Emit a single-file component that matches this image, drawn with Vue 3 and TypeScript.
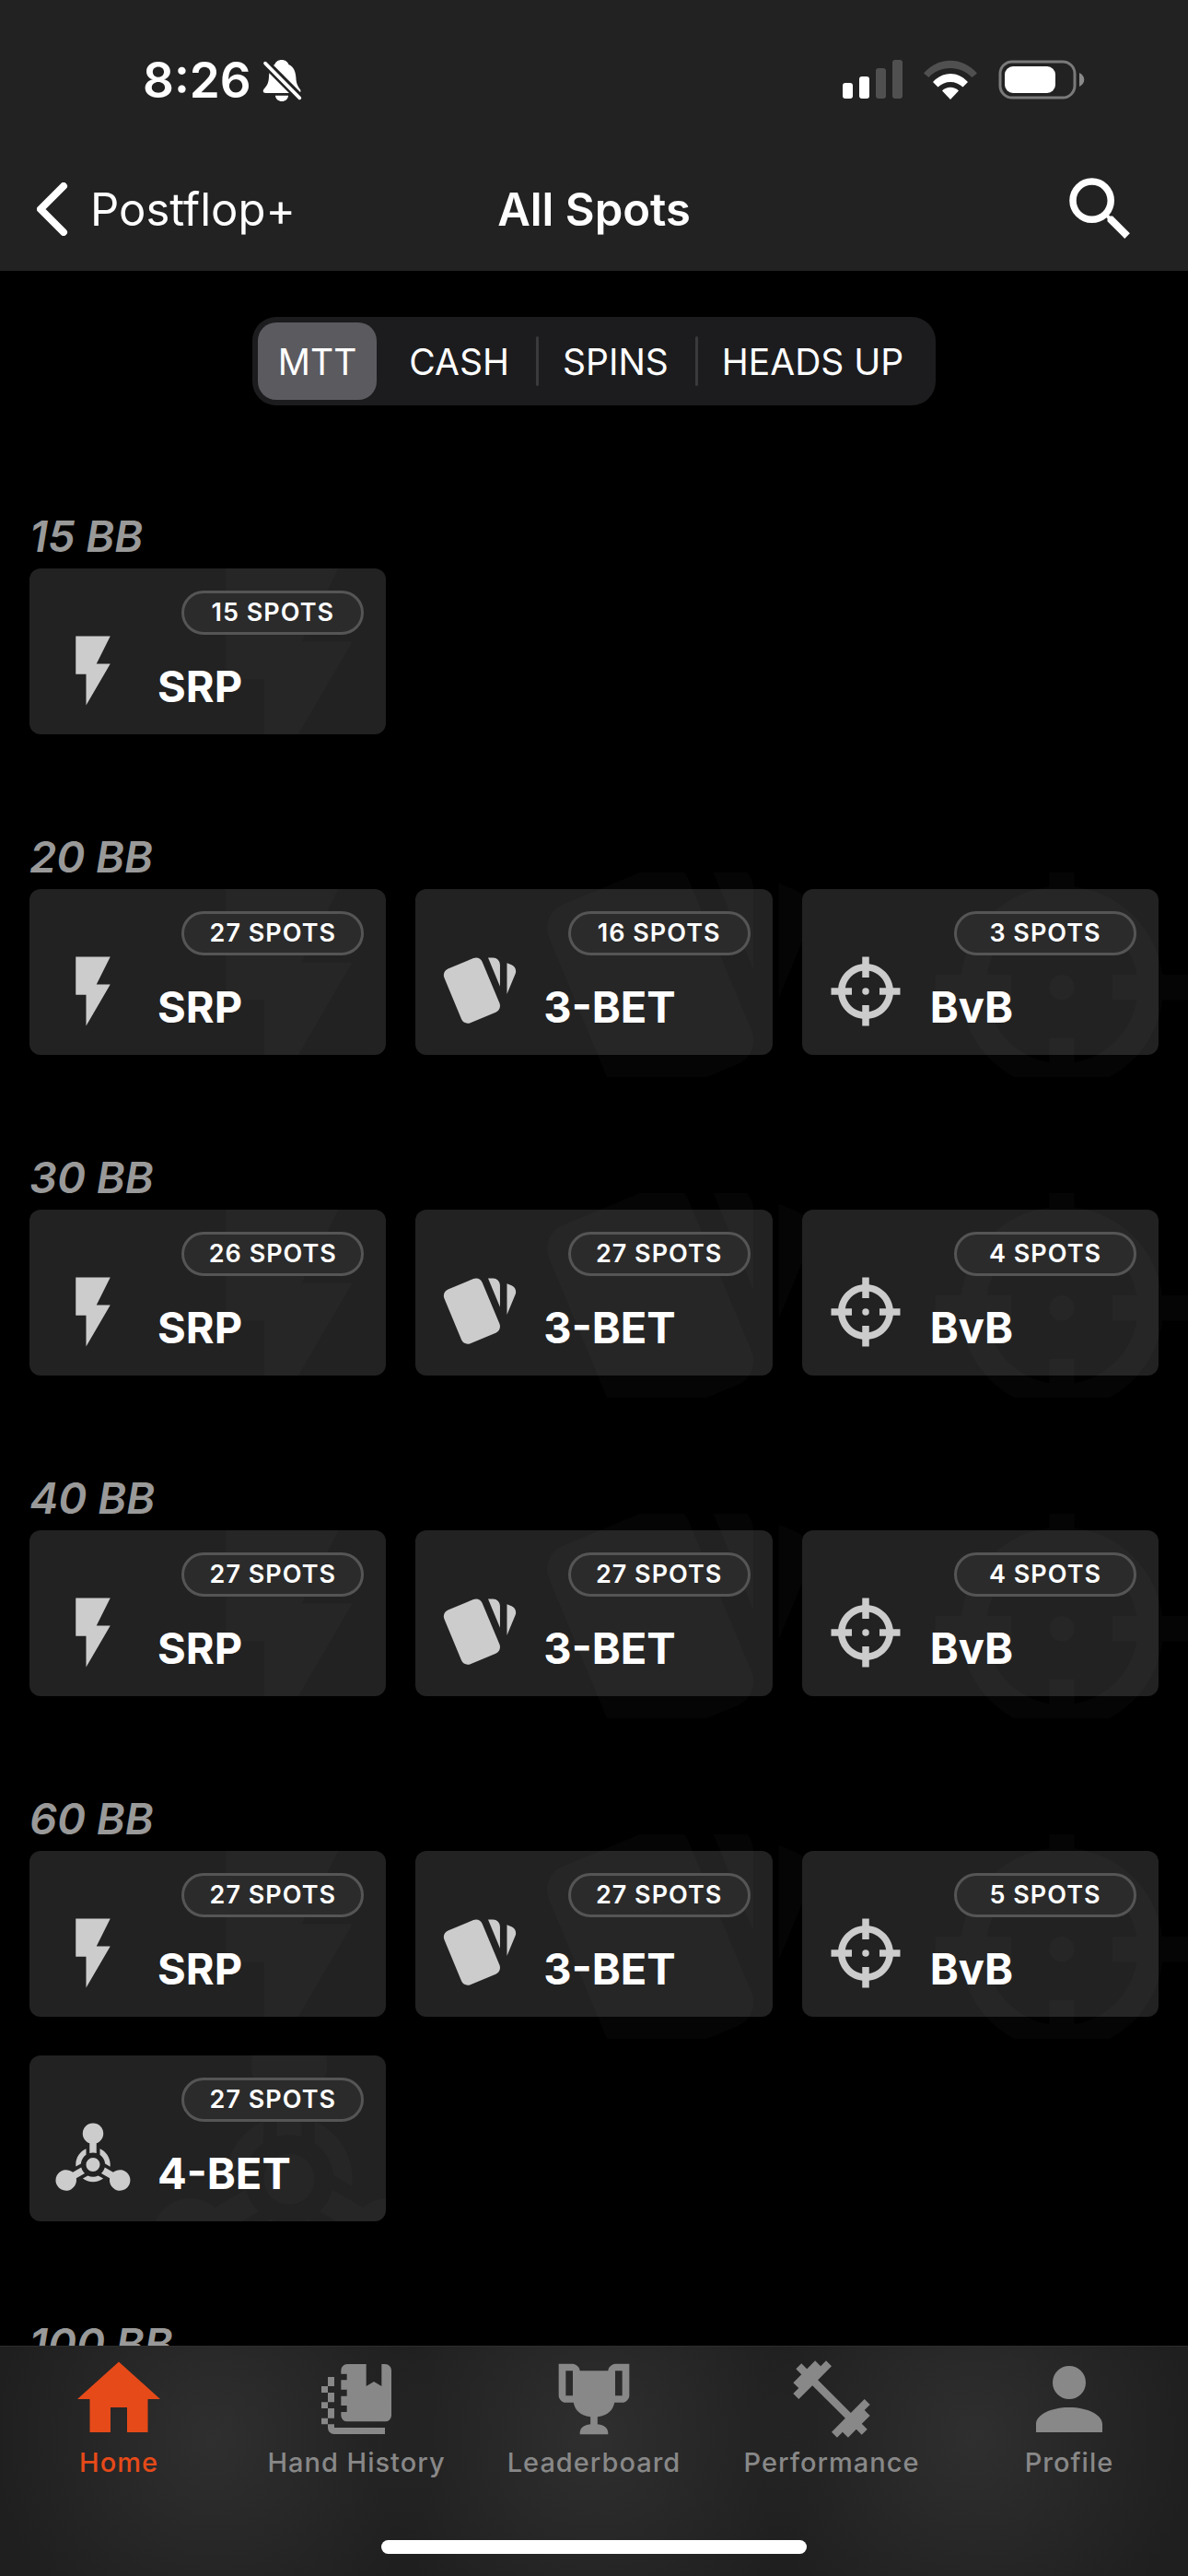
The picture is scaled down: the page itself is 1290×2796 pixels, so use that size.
<script setup lang="ts">
import { ref } from 'vue'

type Kind = 'SRP' | '3-BET' | 'BvB' | '4-BET'

interface Spot {
  kind: Kind
  count: number
}

interface Section {
  title: string
  spots: Spot[]
}

const formats = ['MTT', 'CASH', 'SPINS', 'HEADS UP']
const format = ref('MTT')

const sections: Section[] = [
  { title: '15 BB', spots: [{ kind: 'SRP', count: 15 }] },
  {
    title: '20 BB',
    spots: [
      { kind: 'SRP', count: 27 },
      { kind: '3-BET', count: 16 },
      { kind: 'BvB', count: 3 },
    ],
  },
  {
    title: '30 BB',
    spots: [
      { kind: 'SRP', count: 26 },
      { kind: '3-BET', count: 27 },
      { kind: 'BvB', count: 4 },
    ],
  },
  {
    title: '40 BB',
    spots: [
      { kind: 'SRP', count: 27 },
      { kind: '3-BET', count: 27 },
      { kind: 'BvB', count: 4 },
    ],
  },
  {
    title: '60 BB',
    spots: [
      { kind: 'SRP', count: 27 },
      { kind: '3-BET', count: 27 },
      { kind: 'BvB', count: 5 },
      { kind: '4-BET', count: 27 },
    ],
  },
  { title: '100 BB', spots: [] },
]

const kindIcons: Record<Kind, string> = {
  SRP: 'M7,2V13H10V22L17,10H13L17,2H7Z',
  '3-BET':
    'M21.47,4.35L20.13,3.79V12.82L22.56,6.96C22.97,5.94 22.5,4.77 21.47,4.35M1.97,8.05L6.93,20C7.24,20.77 7.97,21.24 8.74,21.26C9,21.26 9.27,21.21 9.53,21.1L16.9,18.05C17.65,17.74 18.11,17 18.13,16.26C18.14,16 18.09,15.71 18,15.45L13,3.5C12.71,2.73 11.97,2.26 11.19,2.25C10.93,2.25 10.67,2.31 10.42,2.4L3.06,5.45C2.04,5.87 1.55,7.04 1.97,8.05M18.12,4.25A2,2 0 0,0 16.12,2.25H14.67L18.12,10.59',
  BvB: 'M11,2V4.06C7.38,4.5 4.5,7.38 4.06,11H2V13H4.06C4.5,16.62 7.38,19.5 11,19.94V22H13V19.94C16.62,19.5 19.5,16.62 19.94,13H22V11H19.94C19.5,7.38 16.62,4.5 13,4.06V2H11M11,6.08V8H13V6.09C15.5,6.5 17.5,8.5 17.92,11H16V13H17.91C17.5,15.5 15.5,17.5 13,17.92V16H11V17.91C8.5,17.5 6.5,15.5 6.08,13H8V11H6.09C6.5,8.5 8.5,6.5 11,6.08M12,11A1,1 0 0,0 11,12A1,1 0 0,0 12,13A1,1 0 0,0 13,12A1,1 0 0,0 12,11Z',
  '4-BET':
    'M11,7.83C9.83,7.42 9,6.3 9,5A3,3 0 0,1 12,2A3,3 0 0,1 15,5C15,6.31 14.16,7.42 13,7.83V10.64C12.68,10.55 12.35,10.5 12,10.5C11.65,10.5 11.32,10.55 11,10.64V7.83M18.3,21.1C17.16,20.45 16.62,19.18 16.84,17.96L14.4,16.55C14.88,16.09 15.24,15.5 15.4,14.82L17.84,16.23C18.78,15.42 20.16,15.26 21.29,15.91C22.73,16.74 23.22,18.57 22.39,20C21.56,21.44 19.73,21.93 18.3,21.1M2.7,15.9C3.83,15.25 5.21,15.42 6.15,16.22L8.6,14.81C8.76,15.5 9.11,16.08 9.6,16.54L7.15,17.95C7.38,19.17 6.83,20.45 5.7,21.1C4.26,21.93 2.43,21.44 1.6,20C0.77,18.57 1.26,16.73 2.7,15.9M14,14A2,2 0 0,1 12,16C10.89,16 10,15.1 10,14A2,2 0 0,1 12,12C13.11,12 14,12.9 14,14M17,14L16.97,14.57L15.5,13.71C15.4,12.64 14.83,11.71 14,11.12V9.41C15.77,10.19 17,11.95 17,14M14.97,18.03C14.14,18.64 13.11,19 12,19C10.89,19 9.86,18.64 9.03,18L10.5,17.17C10.96,17.38 11.47,17.5 12,17.5C12.53,17.5 13.03,17.38 13.5,17.17L14.97,18.03M7.03,14.56L7,14C7,11.95 8.23,10.19 10,9.42V11.13C9.17,11.71 8.6,12.64 8.5,13.7L7.03,14.56Z',
}

// These icons stay inside their card; the others spill past its edges.
const contained: Kind[] = ['SRP', '4-BET']

interface Tab {
  label: string
  size: 'large' | 'medium' | 'small'
  viewBox: string
  path: string
}

const activeTab = ref('Home')

const tabs: Tab[] = [
  {
    label: 'Home',
    size: 'large',
    viewBox: '0 0 24 24',
    path: 'M10,20V14H14V20H19V12H22L12,3L2,12H5V20H10Z',
  },
  {
    label: 'Hand History',
    size: 'small',
    viewBox: '30 24 276 276',
    path: 'M138 48H200V120L225 105L250 120V48H262a20 20 0 0 1 20 20V215a20 20 0 0 1 -20 20H138a20 20 0 0 1 -20 -20V204H137V183H118V152H137V131H118V100H137V80H118V68a20 20 0 0 1 20 -20ZM75 90h21v30h-21ZM54 120h21v21h-21ZM75 141h21v31h-21ZM54 172h21v20h-21ZM75 192h21v32h-21ZM54 224h21v20h-21ZM75 244H96V255H261V276H95a20 20 0 0 1 -20 -20Z',
  },
  {
    label: 'Leaderboard',
    size: 'small',
    viewBox: '0 0 24 24',
    path: 'M20.2,2H18C17.1,2 16,3 16,4H8C8,3 6.9,2 6,2H2V11C2,12 3,13 4,13H6.2C6.6,15 7.9,16.7 11,17V19.1C8.8,19.3 8,20.4 8,21.7V22H16V21.7C16,20.4 15.2,19.3 13,19.1V17C16.1,16.7 17.4,15 17.8,13H20C21,13 22,12 22,11V2H20.2M4,11V4H6V11H4M20,11H18V4H20V11Z',
  },
  {
    label: 'Performance',
    size: 'medium',
    viewBox: '0 0 24 24',
    path: 'M20.57,14.86L22,13.43L20.57,12L17,15.57L8.43,7L12,3.43L10.57,2L9.14,3.43L7.71,2L5.57,4.14L4.14,2.71L2.71,4.14L4.14,5.57L2,7.71L3.43,9.14L2,10.57L3.43,12L7,8.43L15.57,17L12,20.57L13.43,22L14.86,20.57L16.29,22L18.43,19.86L19.86,21.29L21.29,19.86L19.86,18.43L22,16.29L20.57,14.86Z',
  },
  {
    label: 'Profile',
    size: 'large',
    viewBox: '0 0 24 24',
    path: 'M12,4A4,4 0 0,1 16,8A4,4 0 0,1 12,12A4,4 0 0,1 8,8A4,4 0 0,1 12,4M12,14C16.42,14 20,15.79 20,18V20H4V18C4,15.79 7.58,14 12,14Z',
  },
]
</script>

<template>
  <div class="app">
    <header class="header">
      <div class="status">
        <div class="clock">
          <span>8:26</span>
          <svg class="bell" viewBox="432 44 130 140" aria-hidden="true">
            <path
              fill="#fff"
              d="M495 46c12 0 20 7 23 15c16 7 23 24 24 43c1 22 7 28 13 38c5 7 2 13 -6 13H443c-8 0 -12 -6 -6 -14c8 -9 15 -17 16 -37c1 -22 6 -36 19 -43c3 -8 11 -15 23 -15ZM474 163h43c-2 12 -10 19 -21 19s-20 -7 -22 -19Z"
            />
            <path stroke="#222" stroke-width="28" d="M428 43L555 171" />
            <path stroke="#fff" stroke-width="11" stroke-linecap="round" d="M441 57L554 171" />
          </svg>
        </div>
        <div class="signals">
          <svg class="cell" viewBox="0 0 65 44" aria-hidden="true">
            <rect x="0" y="25" width="11" height="17" rx="3" fill="#fff" />
            <rect x="18" y="18" width="11" height="24" rx="3" fill="#fff" />
            <rect x="36" y="9" width="11" height="33" rx="3" fill="#505050" />
            <rect x="54" y="0" width="11" height="42" rx="3" fill="#505050" />
          </svg>
          <svg class="wifi" viewBox="0 0 58 44" aria-hidden="true">
            <path fill="#505050" d="M0 14.5C16 -4 42 -4 58 14.5L52.5 19C40 5.5 18 5.5 5.5 19Z" />
            <path fill="#fff" d="M10 24C21 12 37 12 48 24L42.5 29.5C35 22 23 22 15.5 29.5Z" />
            <path fill="#fff" d="M20 33.5C25 28.5 33 28.5 38 33.5L29 43Z" />
          </svg>
          <svg class="battery" viewBox="0 0 94 44" aria-hidden="true">
            <rect x="2" y="2" width="81" height="39" rx="13" fill="none" stroke="#7a7a7a" stroke-width="3" />
            <rect x="7" y="7" width="55" height="29" rx="9" fill="#fff" />
            <path fill="#8a8a8a" d="M88 14c7 3 7 12 0 15Z" />
          </svg>
        </div>
      </div>
      <nav class="bar">
        <a class="back" href="#postflop">
          <svg viewBox="0 0 34 58" aria-hidden="true">
            <path fill="none" stroke="#fff" stroke-width="8" stroke-linecap="round" stroke-linejoin="round" d="M29 4L4 29L29 54" />
          </svg>
          <span>Postflop+</span>
        </a>
        <h1>All Spots</h1>
        <button class="search" type="button" aria-label="Search">
          <svg viewBox="0 0 24 24" aria-hidden="true">
            <path
              d="M9.5,3A6.5,6.5 0 0,1 16,9.5C16,11.11 15.41,12.59 14.44,13.73L14.71,14H15.5L20.5,19L19,20.5L14,15.5V14.71L13.73,14.44C12.59,15.41 11.11,16 9.5,16A6.5,6.5 0 0,1 3,9.5A6.5,6.5 0 0,1 9.5,3M9.5,5C7,5 5,7 5,9.5C5,12 7,14 9.5,14C12,14 14,12 14,9.5C14,7 12,5 9.5,5Z"
            />
          </svg>
        </button>
      </nav>
    </header>

    <main class="content">
      <div class="segments" role="group" aria-label="Game format">
        <button
          v-for="item in formats"
          :key="item"
          type="button"
          :class="['segment', { selected: item === format }]"
          :aria-pressed="item === format"
          @click="format = item"
        >
          {{ item }}
        </button>
      </div>

      <section v-for="section in sections" :key="section.title" class="section">
        <h2>{{ section.title }}</h2>
        <div class="grid">
          <button
            v-for="spot in section.spots"
            :key="spot.kind"
            type="button"
            :class="['card', { contained: contained.includes(spot.kind) }]"
          >
            <svg class="watermark" viewBox="0 3 24 16" aria-hidden="true">
              <path :d="kindIcons[spot.kind]" />
            </svg>
            <svg class="icon" viewBox="0 0 24 24" aria-hidden="true">
              <path :d="kindIcons[spot.kind]" />
            </svg>
            <span class="kind">{{ spot.kind }}</span>
            <span class="badge">{{ spot.count }} SPOTS</span>
          </button>
        </div>
      </section>
    </main>

    <footer class="footer">
      <nav class="tabs">
        <a
          v-for="tab in tabs"
          :key="tab.label"
          href="#"
          :class="['tab', { active: tab.label === activeTab }]"
          @click.prevent="activeTab = tab.label"
        >
          <span class="glyph">
            <svg :class="tab.size" :viewBox="tab.viewBox" aria-hidden="true">
              <path :d="tab.path" />
            </svg>
          </span>
          <span>{{ tab.label }}</span>
        </a>
      </nav>
      <div class="home-indicator"></div>
    </footer>
  </div>
</template>

<style>
body {
  margin: 0;
  background: #000;
}
</style>

<style scoped>
.app {
  display: flex;
  flex-direction: column;
  height: 100vh;
  overflow: hidden;
  background: #000;
  color: #fff;
  font-family: Inter, 'Liberation Sans', sans-serif;
}

button {
  border: 0;
  padding: 0;
  background: none;
  color: inherit;
  font: inherit;
}

a {
  color: inherit;
  text-decoration: none;
}

svg {
  display: block;
  flex: none;
}

.header {
  flex: none;
  background: #222;
}

.status {
  display: flex;
  align-items: center;
  justify-content: space-between;
  box-sizing: border-box;
  height: 162px;
  padding: 12px 112px 0 155px;
}

.clock {
  display: flex;
  align-items: center;
  gap: 12px;
  font-size: 53px;
  font-weight: 600;
}

.bell {
  width: 43px;
  height: 47px;
}

.signals {
  display: flex;
  align-items: center;
  gap: 23px;
}

.cell {
  width: 65px;
  height: 44px;
}

.wifi {
  width: 58px;
  height: 44px;
}

.battery {
  width: 94px;
  height: 44px;
}

.bar {
  display: grid;
  grid-template-columns: 1fr auto 1fr;
  align-items: center;
  box-sizing: border-box;
  height: 132px;
  padding: 0 40px 2px;
}

.back {
  display: flex;
  align-items: center;
  gap: 24px;
  font-size: 49px;
}

.back svg {
  width: 34px;
  height: 58px;
}

h1 {
  margin: 0;
  font-size: 49px;
  font-weight: 600;
}

.search {
  justify-self: end;
  padding-right: 10px;
}

.search svg {
  width: 90px;
  height: 90px;
  fill: #fff;
}

.content {
  flex: 1;
  min-height: 0;
  overflow: hidden auto;
  scrollbar-width: none;
  padding-top: 50px;
}

.segments {
  display: flex;
  width: fit-content;
  margin: 0 auto;
  padding: 6px;
  border-radius: 26px;
  background: #1c1c1e;
}

.segment {
  position: relative;
  height: 84px;
  padding: 0 29px;
  border-radius: 20px;
  font-size: 39px;
}

.segment.selected {
  padding: 0 22px;
  margin-right: 6px;
  background: #5b5a5f;
}

.segment:not(.selected) + .segment:not(.selected)::before {
  content: '';
  position: absolute;
  top: 15px;
  left: 0;
  width: 3px;
  height: 54px;
  border-radius: 2px;
  background: #3a3a3c;
}

.section {
  padding: 0 32px 106px;
}

.segments + .section {
  padding-top: 115px;
}

h2 {
  margin: 0;
  padding-bottom: 8px;
  color: #999;
  font-size: 47px;
  font-style: italic;
  font-weight: 600;
  line-height: 54px;
}

.grid {
  display: grid;
  grid-template-columns: repeat(3, 1fr);
  gap: 42px 32px;
}

.card {
  position: relative;
  display: flex;
  align-items: flex-end;
  gap: 25px;
  height: 180px;
  padding: 24px;
  border-radius: 12px;
  background: #222;
}

.card.contained {
  overflow: hidden;
}

.watermark {
  position: absolute;
  top: -18px;
  right: -60px;
  width: 330px;
  height: 222px;
  fill: #fff;
  fill-opacity: 0.02;
}

.icon {
  width: 90px;
  height: 90px;
  fill: #ccc;
}

.kind {
  font-size: 47px;
  font-weight: 700;
  line-height: 56px;
}

.badge {
  position: absolute;
  top: 24px;
  right: 24px;
  box-sizing: border-box;
  width: 198px;
  border: 3px solid #555;
  border-radius: 24px;
  background: #2b2b2b;
  font-size: 27px;
  font-weight: 600;
  letter-spacing: 1px;
  line-height: 42px;
  text-align: center;
}

.footer {
  position: relative;
  flex: none;
  box-sizing: border-box;
  height: 250px;
  border-top: 1px solid #2c2c2c;
  background:
    radial-gradient(circle 240px at 18% 40%, #2f2f2f, transparent),
    radial-gradient(circle 240px at 50% 40%, #2f2f2f, transparent),
    radial-gradient(circle 240px at 82% 40%, #2f2f2f, transparent),
    #1f1f1f;
}

.tabs {
  display: grid;
  grid-template-columns: repeat(5, 1fr);
}

.tab {
  display: flex;
  flex-direction: column;
  align-items: center;
  padding-top: 3px;
  color: #888;
  font-size: 29px;
  font-weight: 500;
  letter-spacing: 1px;
  line-height: 30px;
}

.tab.active {
  color: #e64a19;
}

.glyph {
  display: flex;
  align-items: center;
  height: 108px;
}

.glyph svg {
  fill: currentColor;
}

.large {
  width: 108px;
  height: 108px;
}

.medium {
  width: 100px;
  height: 100px;
}

.small {
  width: 92px;
  height: 92px;
}

.home-indicator {
  position: absolute;
  bottom: 24px;
  left: 50%;
  width: 462px;
  height: 15px;
  margin-left: -231px;
  border-radius: 8px;
  background: #fff;
}
</style>
